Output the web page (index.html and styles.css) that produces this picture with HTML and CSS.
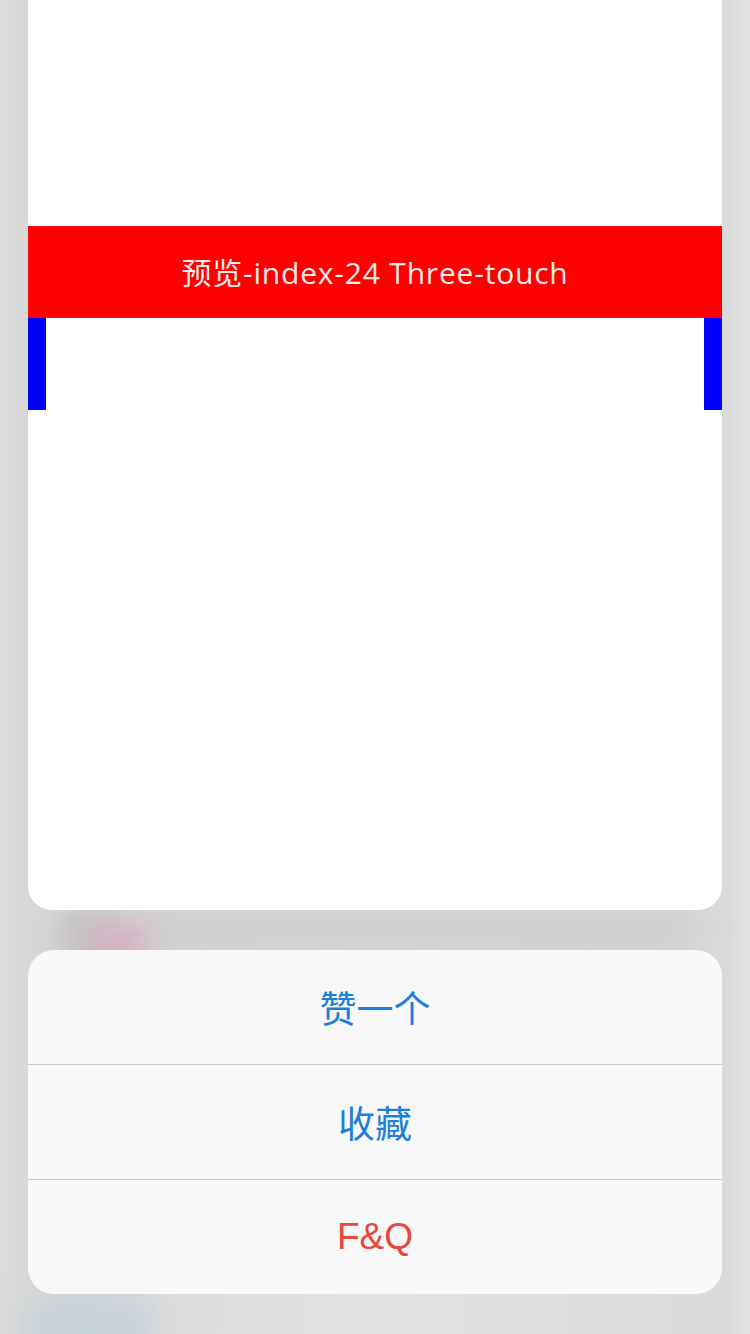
FILE: index.html
```html
<!DOCTYPE html>
<html lang="zh-CN">
<head>
<meta charset="utf-8">
<title>Preview</title>
<link rel="stylesheet" href="styles.css">
</head>
<body>
<div class="screen">
  <div class="blob blob-band"></div>
  <div class="blob blob-dark"></div>
  <div class="blob blob-pink"></div>
  <div class="blob blob-blue"></div>
  <div class="card">
    <div class="card-top"></div>
    <div class="banner">预览-index-24 Three-touch</div>
    <div class="markers">
      <div class="marker"></div>
      <div class="marker"></div>
    </div>
  </div>
  <div class="sheet">
    <div class="action action-blue">赞一个</div>
    <div class="action action-blue">收藏</div>
    <div class="action action-red">F&amp;Q</div>
  </div>
</div>
</body>
</html>
```
FILE: styles.css
```css
html, body {
  margin: 0;
  padding: 0;
}
body {
  width: 750px;
  height: 1334px;
  overflow: hidden;
  font-family: "Liberation Sans", "Noto Sans CJK SC", sans-serif;
}
.screen {
  position: relative;
  width: 750px;
  height: 1334px;
  background: linear-gradient(90deg, #dcdcdc 0%, #d8d8d8 3%, #e2e2e2 50%, #dadada 97%, #e2e2e2 100%);
  display: flex;
  flex-direction: column;
  align-items: center;
  overflow: hidden;
}
.blob {
  position: absolute;
  border-radius: 50%;
  filter: blur(16px);
}
.blob-band {
  left: 60px;
  top: 900px;
  width: 640px;
  height: 60px;
  border-radius: 30px;
  background: #d0d0d0;
}
.blob-dark {
  left: 60px;
  top: 915px;
  width: 50px;
  height: 40px;
  background: #bdbdbd;
}
.blob-pink {
  left: 88px;
  top: 925px;
  width: 60px;
  height: 45px;
  background: rgba(215, 165, 190, 0.85);
}
.blob-blue {
  left: 30px;
  top: 1298px;
  width: 120px;
  height: 60px;
  border-radius: 20px;
  background: rgba(195, 208, 218, 0.9);
}
.card {
  position: relative;
  width: 694px;
  height: 910px;
  background: #ffffff;
  border-radius: 0 0 24px 24px;
  display: flex;
  flex-direction: column;
  flex-shrink: 0;
}
.card-top {
  height: 226px;
}
.banner {
  height: 92px;
  background: #ff0000;
  color: #fdeaea;
  font-family: "Open Sans", "Noto Sans CJK SC", sans-serif;
  font-size: 30px;
  letter-spacing: 0.8px;
  display: flex;
  align-items: center;
  justify-content: center;
  padding-bottom: 2px;
  box-sizing: border-box;
}
.markers {
  height: 92px;
  display: flex;
  justify-content: space-between;
}
.marker {
  width: 18px;
  background: #0000ff;
}
.sheet {
  position: relative;
  margin-top: 40px;
  width: 694px;
  background: #f8f8f8;
  border-radius: 26px;
  overflow: hidden;
  display: flex;
  flex-direction: column;
  flex-shrink: 0;
}
.action {
  height: 114px;
  display: flex;
  align-items: center;
  justify-content: center;
  font-size: 37px;
  border-top: 1px solid #c9c9c9;
}
.action:first-child {
  border-top: none;
}
.action-blue {
  color: #1b7fe0;
}
.action-red {
  color: #e8473d;
}
```
